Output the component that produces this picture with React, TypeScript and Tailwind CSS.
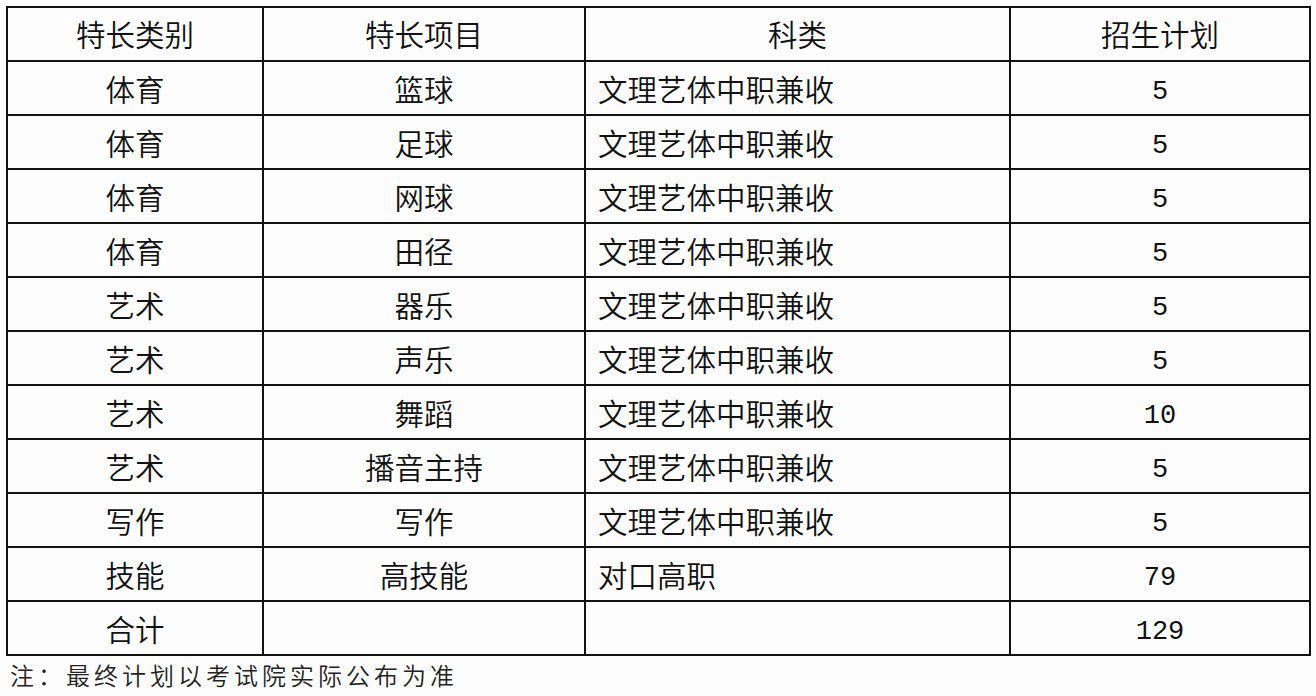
import React from "react";

const rows: [string, string, string, string][] = [
  ["体育", "篮球", "文理艺体中职兼收", "5"],
  ["体育", "足球", "文理艺体中职兼收", "5"],
  ["体育", "网球", "文理艺体中职兼收", "5"],
  ["体育", "田径", "文理艺体中职兼收", "5"],
  ["艺术", "器乐", "文理艺体中职兼收", "5"],
  ["艺术", "声乐", "文理艺体中职兼收", "5"],
  ["艺术", "舞蹈", "文理艺体中职兼收", "10"],
  ["艺术", "播音主持", "文理艺体中职兼收", "5"],
  ["写作", "写作", "文理艺体中职兼收", "5"],
  ["技能", "高技能", "对口高职", "79"],
  ["合计", "", "", "129"],
];

const cjk = { fontFamily: '"Noto Sans CJK SC", "Noto Sans", sans-serif' };
const mono = { fontFamily: '"Liberation Mono", "DejaVu Sans Mono", monospace' };

export default function App() {
  return (
    <div className="w-[1316px] h-[696px] bg-[#fdfdfd] text-[#111] overflow-hidden" style={cjk}>
      <div className="pt-[6px] pl-[6px]">
        <table className="border-collapse border-2 border-[#111] table-fixed w-[1303px]">
          <colgroup>
            <col className="w-[256px]" />
            <col className="w-[322px]" />
            <col className="w-[425px]" />
            <col className="w-[300px]" />
          </colgroup>
          <thead>
            <tr className="h-[54px]">
              {["特长类别", "特长项目", "科类", "招生计划"].map((h) => (
                <th key={h} className="border-2 border-[#111] font-[350] text-[29.5px] leading-none text-center p-0">
                  {h}
                </th>
              ))}
            </tr>
          </thead>
          <tbody>
            {rows.map((r, i) => (
              <tr key={i} className="h-[54px]">
                <td className="border-2 border-[#111] font-[350] text-[29.5px] leading-none text-center p-0 pt-[2px]">{r[0]}</td>
                <td className="border-2 border-[#111] font-[350] text-[29.5px] leading-none text-center p-0 pt-[2px]">{r[1]}</td>
                <td className="border-2 border-[#111] font-[350] text-[29.5px] leading-none text-left pl-[12px] pt-[2px]">{r[2]}</td>
                <td className="border-2 border-[#111] text-[27px] leading-none text-center p-0 pt-[8px]" style={mono}>
                  {r[3]}
                </td>
              </tr>
            ))}
          </tbody>
        </table>
        <div className="mt-[4px] pl-[4px] text-[24px] font-[350] leading-[30px] tracking-[4px] text-[#222]">
          注：最终计划以考试院实际公布为准
        </div>
      </div>
    </div>
  );
}
